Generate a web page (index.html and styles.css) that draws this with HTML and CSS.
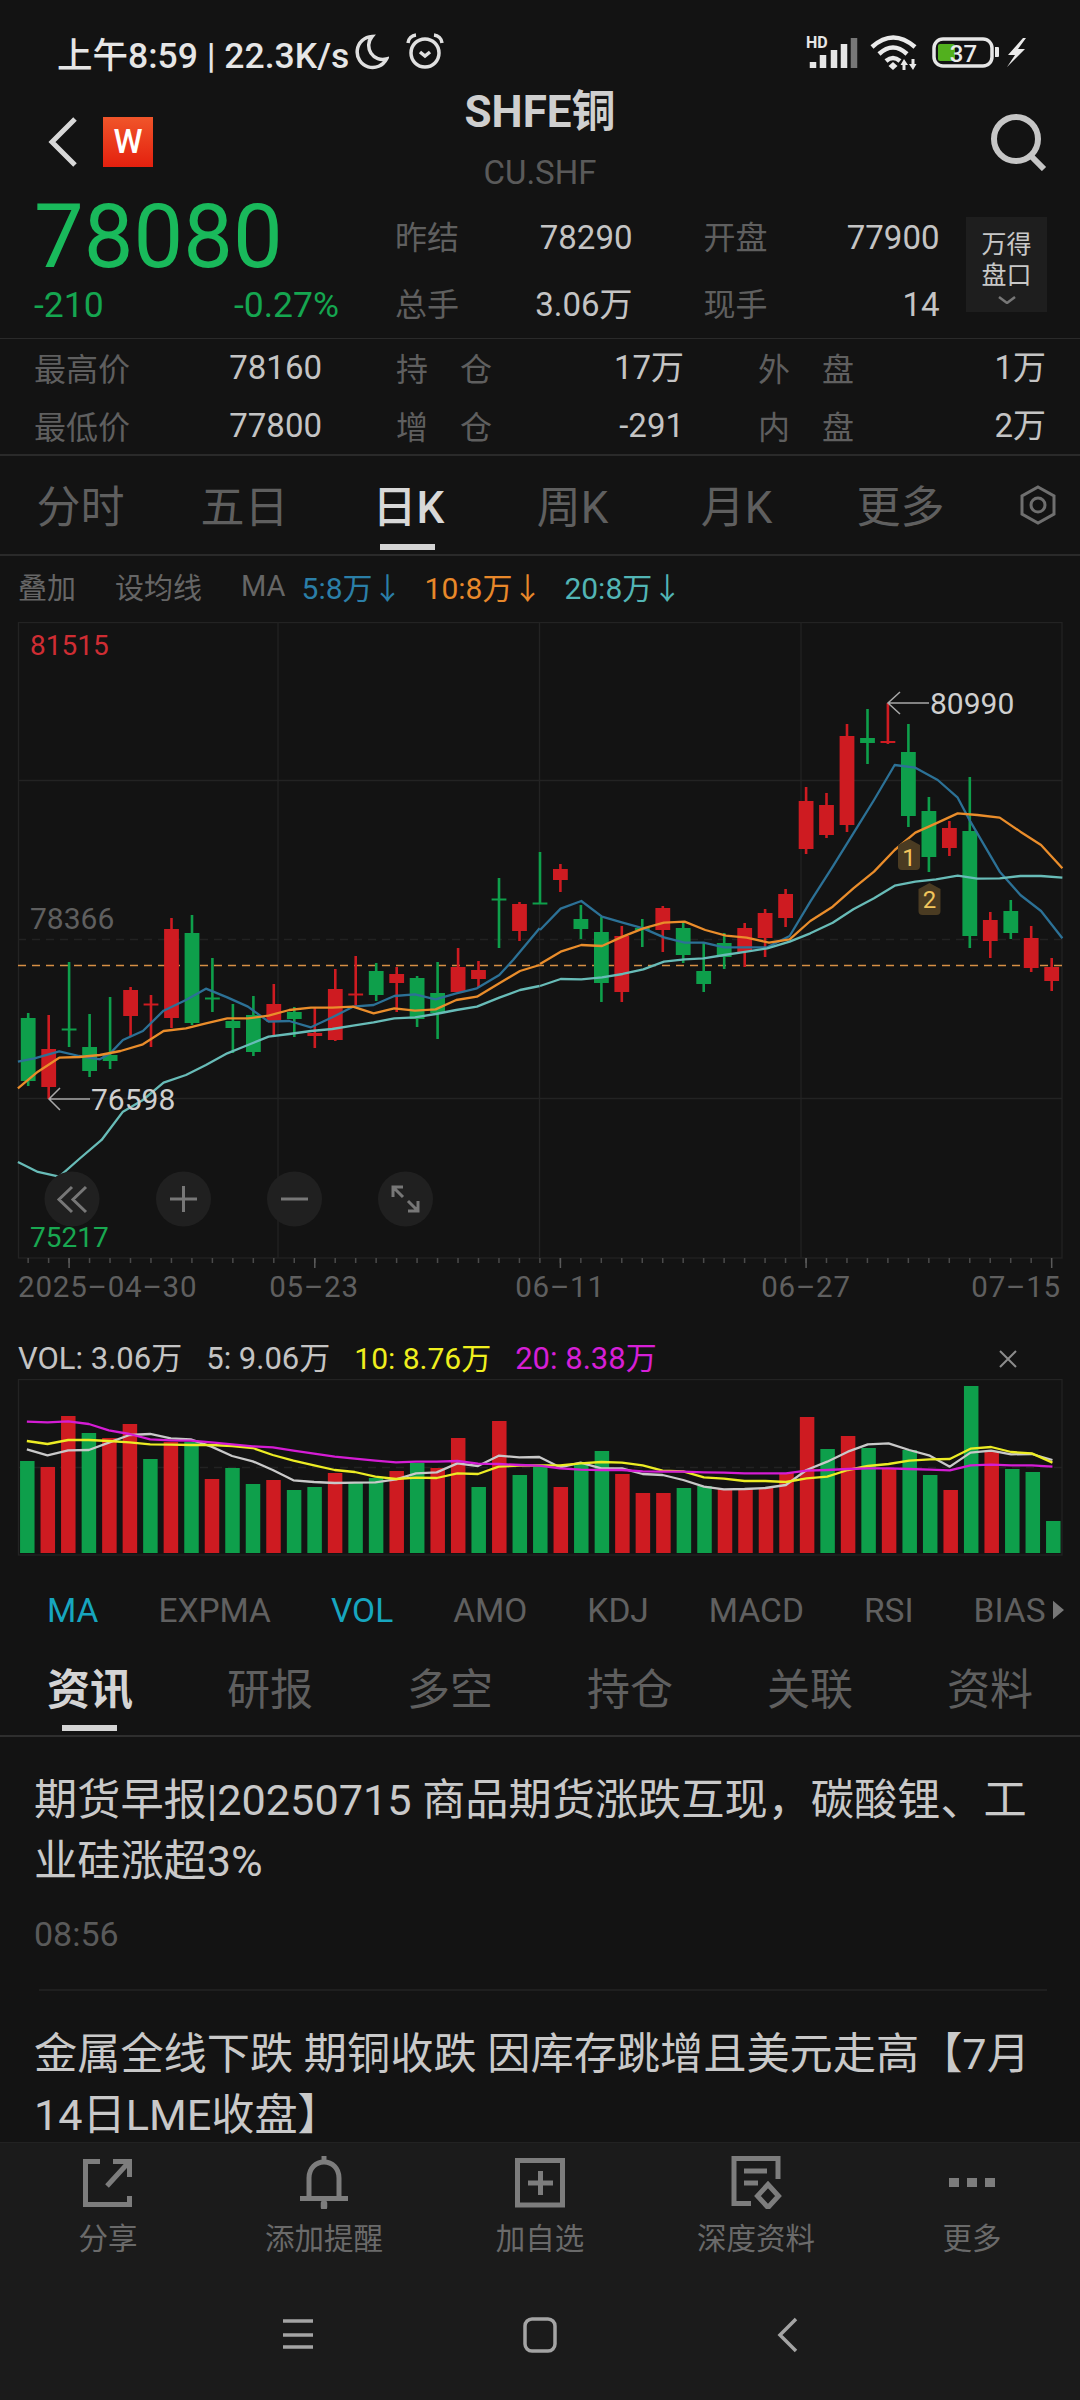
FILE: index.html
```html
<!DOCTYPE html>
<html lang="zh-CN">
<head>
<meta charset="utf-8">
<title>SHFE铜</title>
<link rel="stylesheet" href="styles.css">
</head>
<body>
<div class="app">
  <header class="status">
    <span class="status-text">上午8:59 | 22.3K/s</span>
    <svg class="moon" viewBox="0 0 36 36"><path class="st-line" d="M19 2.5A15.5 15.5 0 1 0 33.5 25 A14 14 0 0 1 19 2.5Z"/></svg>
    <svg class="alarm" viewBox="0 0 40 40"><circle class="st-line" cx="20" cy="21" r="14"/><path class="st-line" d="M3 11A9 9 0 0 1 11 3M37 11A9 9 0 0 0 29 3M15 20l5 4 5-4"/></svg>
    <svg class="status-right" viewBox="800 30 230 44">
      <text class="st-hd" x="806" y="48">HD</text>
      <path class="st-bar" d="M813 68V62M823 68V55M834 68V50M844 68V44"/>
      <path class="st-bar-off" d="M854 68V38"/>
      <path class="st-wifi" d="M872 47Q893 28 915 47M879 54Q893 41 907 54M886 61Q893 55 900 61"/>
      <path class="st-fill" d="M893 62l4.500 4-4.500 4-4.500-4zM904 59l4 6h-2.500v5h-3v-5h-2zM913 70l-4-6h2.500v-5h3v5h2z"/>
      <rect class="st-batt" x="934" y="39" width="58" height="27" rx="9"/>
      <rect class="st-level" x="938" y="44" width="17" height="17" rx="2"/>
      <text class="st-batt-num" x="963.500" y="61.500">37</text>
      <path class="st-fill" d="M995 47h3a1 1 0 0 1 1 1v8a1 1 0 0 1-1 1h-3zM1023 38l-15 17h7l-8 12 18-18h-7l8-11z"/>
    </svg>
  </header>

  <nav class="topbar">
    <div class="topbar-left">
      <svg class="back" viewBox="0 0 32 52"><path d="M28 3L5 26l23 23"/></svg>
      <span class="logo">W</span>
    </div>
    <div class="topbar-title">
      <div class="title">SHFE铜</div>
      <div class="subtitle">CU.SHF</div>
    </div>
    <svg class="search" viewBox="0 0 58 58"><circle cx="26" cy="26" r="22"/><path d="M41 43l13 13"/></svg>
  </nav>

  <section class="quote">
    <div class="price-block">
      <div class="price">78080</div>
      <div class="change"><span>-210</span><span>-0.27%</span></div>
    </div>
    <div class="stats">
      <div class="stat-row">
        <div class="stat"><span class="lab">昨结</span><span class="val">78290</span></div>
        <div class="stat"><span class="lab">开盘</span><span class="val">77900</span></div>
      </div>
      <div class="stat-row">
        <div class="stat"><span class="lab">总手</span><span class="val">3.06万</span></div>
        <div class="stat"><span class="lab">现手</span><span class="val">14</span></div>
      </div>
    </div>
    <div class="wind-btn">
      <span>万得</span><span>盘口</span>
      <svg class="wind-chev" viewBox="0 0 18 8"><path d="M1 1l8 6 8-6"/></svg>
    </div>
  </section>

  <section class="detail">
    <div class="detail-row">
      <div class="dcell"><span class="dlab">最高价</span><span class="val">78160</span></div>
      <div class="dcell"><span class="dlab">持　仓</span><span class="val">17万</span></div>
      <div class="dcell"><span class="dlab">外　盘</span><span class="val">1万</span></div>
    </div>
    <div class="detail-row">
      <div class="dcell"><span class="dlab">最低价</span><span class="val">77800</span></div>
      <div class="dcell"><span class="dlab">增　仓</span><span class="val">-291</span></div>
      <div class="dcell"><span class="dlab">内　盘</span><span class="val">2万</span></div>
    </div>
  </section>

  <div class="period-tabs">
    <span class="ptab">分时</span>
    <span class="ptab">五日</span>
    <span class="ptab active">日K</span>
    <span class="ptab">周K</span>
    <span class="ptab">月K</span>
    <span class="ptab">更多</span>
    <svg class="hex" viewBox="0 0 36 40"><path d="M18 2l16 9v18l-16 9-16-9V11z"/><circle cx="18" cy="20" r="7"/></svg>
  </div>

  <div class="ma-row">
    <span class="ma-tool">叠加</span>
    <span class="ma-tool">设均线</span>
    <span class="ma-tool ma-name">MA</span>
    <span class="ma-val c-blue">5:8万↓</span>
    <span class="ma-val c-orange">10:8万↓</span>
    <span class="ma-val c-teal">20:8万↓</span>
  </div>

  <svg class="kline" viewBox="0 622 1080 686">
    <rect class="grid" x="18.500" y="622.500" width="1043.500" height="635.500"/>
    <path class="grid" d="M278 622V1258M539.500 622V1258M801 622V1258M18 780.500H1062M18 1098.500H1062"/>
    <path class="grid-dash" d="M18 939.500H1062"/>
    <path class="last-dash" d="M18 965.500H1062"/>

    <path class="wick red" d="M48.700 1015V1099M130.600 987V1037M151 995V1047M171.500 918V1028M273.800 984V1036M314.800 1008V1048M335.300 969V1041M355.700 956V1008M396.700 967V1012M458.100 948V993M478.500 961V987M519.500 902V941M560.400 864V892M621.800 926V1002M662.800 906V952M744.700 923V967M765.100 909V957M785.600 889V927M806.100 787V854M826.500 793V838M847 724V832M887.900 703V744M949.400 821V856M990.300 912V958M1031.200 926V972M1051.700 958V991"/>
    <path class="body red" d="M48.700 1049V1087M130.600 990V1016M151 1003.500V1005.500M171.500 929V1018M273.800 1004V1022M314.800 1033V1036M335.300 989V1040M355.700 993.500V995.500M396.700 974V983M458.100 967V992M478.500 970V979M519.500 904V931M560.400 869V880M621.800 936V992M662.800 908V930M744.700 928V952M765.100 913V938M785.600 894V918M806.100 801V849M826.500 805V835M847 736V825M887.900 741V743M949.400 828V848M990.300 920V941M1031.200 938V968M1051.700 967V981"/>
    <path class="wick green" d="M28.200 1013V1086M69.100 962V1047M89.600 1014V1077M110.100 997V1069M192 915V1025M212.400 958V1012M232.900 1004V1053M253.400 996V1056M294.300 1007V1037M376.200 963V1001M417.100 976V1027M437.600 962V1039M499 878V948M540 852V904M580.900 905V939M601.400 917V1002M642.300 919V947M683.200 923V963M703.700 942V992M724.200 933V969M867.500 709V764M908.400 724V827M928.900 797V872M969.800 777V948M1010.800 900V939"/>
    <path class="body green" d="M28.200 1018V1081M69.100 1028.500V1030.500M89.600 1047V1071M110.100 1055V1061M192 933V1023M212.400 997.500V999.500M232.900 1021V1028M253.400 1015V1052M294.300 1012V1019M376.200 971V995M417.100 978V1019M437.600 993V1013M499 898.500V900.500M540 902.500V904.500M580.900 919V929M601.400 932V983M642.300 928V930M683.200 928V955M703.700 971V984M724.200 943V957M867.500 738V743M908.400 752V816M928.900 811V857M969.800 831V936M1010.800 911V933"/>

    <g class="seg-left">
      <polyline class="ma c-blue-s" points="52,305 100,295 172,274 230,288 290,298 320,280 357,240 415,213 475,152 540,120 598,86 660,112 720,140 780,185 840,183 903,202 965,172 1025,140 1085,135 1145,108 1205,103 1265,118 1325,100 1385,85 1450,45 1490,0 1567,-95"/>
      <polyline class="ma c-orange-s" points="52,385 110,335 172,293 230,291 290,285 350,273 415,253 475,213 540,205 598,190 660,175 720,175 780,167 840,150 903,143 965,143 1025,140 1085,160 1145,145 1205,152 1265,148 1325,120 1385,110 1450,70 1510,33 1567,15"/>
      <polyline class="ma c-teal-s" points="52,606 110,636 172,650 230,597 295,540 357,455 415,420 475,368 540,345 598,315 660,280 720,255 780,230 840,222 903,213 965,207 1025,197 1085,187 1145,175 1205,172 1265,162 1325,150 1385,140 1450,113 1510,90 1567,78"/>
    </g>
    <g class="seg-right">
      <polyline class="ma c-blue-s" points="0,930 60,866 120,843 180,890 240,908 300,925 360,952 420,968 475,968 535,982 600,982 660,982 725,948 785,845 850,740 910,640 970,540 1030,435 1090,443 1155,480 1213,533 1250,605 1335,755 1395,825 1455,873 1517,955"/>
      <polyline class="ma c-orange-s" points="0,1032 60,995 120,975 180,978 240,950 300,925 360,908 420,905 480,930 540,947 600,953 665,968 725,958 785,903 850,860 910,805 970,755 1030,690 1090,638 1150,610 1213,580 1270,585 1335,593 1395,635 1455,675 1517,745"/>
      <polyline class="ma c-teal-s" points="0,1098 60,1077 120,1078 180,1072 240,1062 300,1048 360,1025 420,1018 475,1015 535,1005 600,995 660,985 725,965 785,940 850,908 910,868 970,835 1030,797 1090,785 1150,778 1213,767 1270,776 1335,775 1395,768 1455,768 1517,773"/>
    </g>

    <path class="badge" d="M898 845L909 839L920 845V866Q920 870 916 870H902Q898 870 898 866Z"/>
    <text class="badge-num" x="909" y="866">1</text>
    <path class="badge" d="M918.500 889L929.500 883L940.500 889V911Q940.500 915 936.500 915H922.500Q918.500 915 918.500 911Z"/>
    <text class="badge-num" x="929.500" y="908">2</text>

    <text class="lv red-t" x="30" y="655">81515</text>
    <text class="lv mid-t" x="30" y="929">78366</text>
    <text class="lv green-t" x="30" y="1247">75217</text>
    <path class="pin" d="M929 703H889M900 692L888 703L900 714M90 1099H49M60 1088L49 1099L60 1110"/>
    <text class="lv pin-t" x="930" y="714">80990</text>
    <text class="lv pin-t" x="91" y="1110">76598</text>

    <circle class="zoom-bg" cx="72" cy="1199" r="27.500"/>
    <circle class="zoom-bg" cx="183.500" cy="1199" r="27.500"/>
    <circle class="zoom-bg" cx="294.500" cy="1199" r="27.500"/>
    <circle class="zoom-bg" cx="405.500" cy="1199" r="27.500"/>
    <path class="zoom-ic" d="M72 1187L59 1199.500L72 1212M86 1187L73 1199.500L86 1212M170 1199H197M183.500 1186V1212M281 1199H308M393 1197V1187H403M393 1187L403 1197M418 1201V1211H408M418 1211L408 1201"/>

    <line class="ticks" x1="27.400" x2="1052" y1="1260.500" y2="1260.500"/>
    <path class="tick-long" d="M69.100 1258V1268M314.800 1258V1268M560.400 1258V1268M806.100 1258V1268M1051.700 1258V1268"/>
    <text class="date" x="18" y="1297">2025–04–30</text>
    <text class="date mid" x="314" y="1297">05–23</text>
    <text class="date mid" x="560" y="1297">06–11</text>
    <text class="date mid" x="806" y="1297">06–27</text>
    <text class="date end" x="1061" y="1297">07–15</text>
  </svg>

  <div class="vol-legend">
    <span class="vl-white">VOL: 3.06万</span>
    <span class="vl-white">5: 9.06万</span>
    <span class="vl-yellow">10: 8.76万</span>
    <span class="vl-magenta">20: 8.38万</span>
    <svg class="vol-close" viewBox="0 0 18 18"><path d="M1 1l16 16M17 1L1 17"/></svg>
  </div>

  <svg class="vol" viewBox="0 1379 1080 178">
    <rect class="grid" x="18.500" y="1379.500" width="1043.500" height="175.500"/>
    <path class="grid-dash" d="M18 1467.500H1062"/>
    <path class="vbar red" d="M47.800 1553V1467M68.300 1553V1416M109.400 1553V1438M129.900 1553V1424M170.900 1553V1442M212 1553V1479M273.500 1553V1480M335.100 1553V1473M396.700 1553V1471M437.700 1553V1468M458.200 1553V1438M499.300 1553V1421M560.800 1553V1487M622.400 1553V1474M642.900 1553V1493M663.400 1553V1493M725 1553V1489M745.500 1553V1489M766 1553V1488M786.500 1553V1473M807.100 1553V1417M848.100 1553V1436M889.100 1553V1468M950.700 1553V1490M991.700 1553V1452"/>
    <path class="vbar green" d="M27.300 1553V1461M88.900 1553V1433M150.400 1553V1459M191.500 1553V1442M232.500 1553V1468M253 1553V1484M294.100 1553V1490M314.600 1553V1487M355.600 1553V1482M376.100 1553V1478M417.200 1553V1463M478.700 1553V1487M519.800 1553V1475M540.300 1553V1467M581.300 1553V1463M601.900 1553V1451M683.900 1553V1488M704.500 1553V1486M827.600 1553V1449M868.600 1553V1448M909.700 1553V1450M930.200 1553V1475M971.200 1553V1386M1012.300 1553V1469M1032.800 1553V1472M1053.300 1553V1521"/>
    <g class="seg-vol">
      <polyline class="ma vm-white" points="39,388 69,406 99,391 129,390 158,368 188,345 218,342 248,355 277,358 307,380 337,408 367,424 396,450 426,481 456,486 486,489 515,488 545,487 575,478 604,460 634,457 664,430 694,438 724,407 754,412 783,411 813,442 843,428 873,445 903,445 933,462 962,465 992,480 1022,500 1051,508 1081,507 1111,504 1141,495 1171,450 1201,425 1231,395 1260,373 1290,370 1320,390 1350,407 1379,440 1409,398 1439,392 1468,403 1498,402 1528,420"/>
      <polyline class="ma vm-yellow" points="39,363 69,372 99,360 129,360 158,363 188,367 218,373 248,374 277,375 307,375 337,378 367,384 396,405 426,422 456,436 486,450 515,456 545,470 575,477 604,473 634,474 664,460 694,462 724,440 754,437 783,436 813,436 843,430 873,426 903,428 933,436 962,452 992,454 1022,472 1051,476 1081,483 1111,483 1141,486 1171,475 1201,470 1231,450 1260,438 1290,432 1320,422 1350,418 1379,417 1409,386 1439,381 1468,396 1498,400 1528,428"/>
      <polyline class="ma vm-magenta" points="39,305 69,307 99,304 129,312 158,331 188,342 218,358 248,361 277,362 307,367 337,373 367,379 396,382 426,392 456,401 486,410 515,416 545,422 575,427 604,425 634,425 664,423 694,431 724,432 754,435 783,437 813,445 843,449 873,450 903,450 933,454 962,455 992,455 1022,457 1051,458 1081,460 1111,460 1141,460 1171,452 1201,450 1231,447 1260,445 1290,445 1320,447 1350,449 1379,451 1409,436 1439,434 1468,436 1498,436 1528,440"/>
    </g>
  </svg>

  <div class="ind-tabs">
    <span class="on">MA</span>
    <span>EXPMA</span>
    <span class="on">VOL</span>
    <span>AMO</span>
    <span>KDJ</span>
    <span>MACD</span>
    <span>RSI</span>
    <span>BIAS</span>
    <svg class="ind-more" viewBox="0 0 12 20"><path d="M0 0l12 10L0 20z"/></svg>
  </div>

  <div class="news-tabs">
    <span class="ntab active">资讯</span>
    <span class="ntab">研报</span>
    <span class="ntab">多空</span>
    <span class="ntab">持仓</span>
    <span class="ntab">关联</span>
    <span class="ntab">资料</span>
  </div>

  <main class="news">
    <article class="news-item">
      <h2 class="headline">期货早报|20250715 商品期货涨跌互现，碳酸锂、工业硅涨超3%</h2>
      <time class="news-time">08:56</time>
    </article>
    <div class="news-sep"></div>
    <article class="news-item">
      <h2 class="headline">金属全线下跌 期铜收跌 因库存跳增且美元走高【7月14日LME收盘】</h2>
    </article>
  </main>

  <footer class="bottom">
    <div class="actions">
      <div class="action">
        <svg class="act-ic" viewBox="0 0 56 56"><path d="M20 8.500H5.500V51.500H49.500V43M27 33L49 9M33 8.500H49.500V24"/></svg>
        <span>分享</span>
      </div>
      <div class="action">
        <svg class="act-ic" viewBox="0 0 56 56"><path d="M13 44V25C13 15 20 9 28 9S43 15 43 25V44M4 45.500H52M28 3V9"/><path class="thick" d="M28 50.500V54"/></svg>
        <span>添加提醒</span>
      </div>
      <div class="action">
        <svg class="act-ic" viewBox="0 0 56 56"><path d="M5.500 7.500H50.500V52H5.500ZM16 30H41M28.500 18V42"/></svg>
        <span>加自选</span>
      </div>
      <div class="action">
        <svg class="act-ic" viewBox="0 0 56 56"><path d="M23 50.500H6V5.500H50V26M16 18H39M16 30H30M40 31.500L50.500 43L40 54.500L29.500 43Z"/></svg>
        <span>深度资料</span>
      </div>
      <div class="action">
        <svg class="act-ic" viewBox="0 0 56 56"><path class="dots" d="M5 25h10v9H5zM23 25h10v9H23zM41 25h10v9H41z"/></svg>
        <span>更多</span>
      </div>
    </div>
    <div class="sysnav">
      <svg class="sys-ic" viewBox="0 0 40 40"><path d="M5 6H35M5 20H35M5 32H35"/></svg>
      <svg class="sys-ic" viewBox="0 0 40 40"><rect x="5" y="4" width="30" height="32" rx="7"/></svg>
      <svg class="sys-ic" viewBox="0 0 40 40"><path d="M28 4L12 20L28 36"/></svg>
    </div>
  </footer>
</div>
</body>
</html>
```

FILE: styles.css
```css
* { box-sizing: border-box; }
html, body { margin: 0; padding: 0; background: #131313; }
body { font-family: Roboto, "Noto Sans CJK SC", sans-serif; color: #c8c8c8; }
svg { display: block; flex: none; }
.app { width: 1080px; height: 2400px; display: flex; flex-direction: column; overflow: hidden; background: #131313; }

/* status bar */
.status { height: 80px; padding: 24px 50px 0 57px; display: flex; align-items: center; flex: none; }
.status-text { font-size: 35.500px; font-weight: 500; color: #e6e6e6; white-space: nowrap; }
.moon { width: 36px; height: 36px; margin-left: 4px; }
.alarm { width: 40px; height: 40px; margin-left: 16px; }
.status-right { width: 230px; height: 44px; margin-left: auto; }
.st-line { fill: none; stroke: #e0e0e0; stroke-width: 3.5; }
.st-hd { font-size: 16px; font-weight: 700; fill: #e6e6e6; }
.st-bar { stroke: #e6e6e6; stroke-width: 6.500; fill: none; }
.st-bar-off { stroke: #777; stroke-width: 6.500; fill: none; }
.st-wifi { fill: none; stroke: #eaeaea; stroke-width: 4.500; }
.st-fill { fill: #eaeaea; }
.st-batt { fill: none; stroke: #e6e6e6; stroke-width: 3.500; }
.st-level { fill: #52b01e; }
.st-batt-num { font-size: 24px; font-weight: 500; fill: #eaeaea; text-anchor: middle; }

/* top bar */
.topbar { height: 124px; flex: none; display: grid; grid-template-columns: 300px 480px 300px; align-items: center; }
.topbar-left { display: flex; align-items: center; padding-left: 47px; }
.back { width: 32px; height: 52px; }
.back path { fill: none; stroke: #d8d8d8; stroke-width: 5; }
.logo { width: 50px; height: 50px; margin-left: 24px; background: linear-gradient(180deg, #f0552a, #e4200e); color: #fff; font-size: 33px; font-weight: 500; text-align: center; line-height: 50px; }
.topbar-title { text-align: center; }
.title { height: 62px; line-height: 64px; font-size: 44px; font-weight: 700; color: #cfcfcf; }
.subtitle { height: 62px; line-height: 62px; font-size: 33px; color: #5a5a5a; }
.search { width: 58px; height: 58px; justify-self: end; margin-right: 32px; }
.search circle, .search path { fill: none; stroke: #c6c6c6; stroke-width: 6; }

/* quote */
.quote { height: 135px; flex: none; display: flex; align-items: flex-start; padding-left: 34px; border-bottom: 1px solid #2a2a2a; }
.price-block { width: 361px; flex: none; }
.price { font-size: 88.500px; line-height: 67px; height: 67px; color: #19b95b; }
.change { width: 305px; height: 68px; display: flex; justify-content: space-between; align-items: center; font-size: 35.500px; color: #15a650; }
.stats { width: 546px; flex: none; }
.stat-row { height: 67px; display: flex; gap: 71px; align-items: center; }
.stat-row + .stat-row { height: 68px; }
.stat { width: 237.500px; display: flex; justify-content: space-between; align-items: center; }
.stat + .stat { width: 236px; }
.lab { font-size: 32px; color: #5f5f5f; margin-bottom: 6px; }
.val { font-size: 33px; line-height: 40px; height: 40px; color: #c4c4c4; }
.wind-btn { width: 81px; height: 95px; margin: 13px 0 0 25px; background: #1e1e1e; display: flex; flex-direction: column; align-items: center; padding-top: 12px; font-size: 25px; line-height: 31px; color: #c8c8c8; }
.wind-chev { width: 18px; height: 8px; margin-top: 5px; }
.wind-chev path { fill: none; stroke: #777; stroke-width: 2.500; }

/* day detail */
.detail { height: 117px; flex: none; padding: 0 34px; border-bottom: 2px solid #2a2a2a; }
.detail-row { height: 58px; display: flex; align-items: center; gap: 74px; }
.dcell { width: 288px; display: flex; justify-content: space-between; align-items: center; }
.dlab { font-size: 32px; color: #5f5f5f; margin-bottom: 3px; }

/* period tabs */
.period-tabs { height: 100px; flex: none; display: grid; grid-template-columns: repeat(6, 164px) 54px; align-items: center; border-bottom: 2px solid #2a2a2a; }
.ptab { position: relative; height: 98px; line-height: 104px; padding-right: 3px; text-align: center; font-size: 44px; color: #5f5f5f; }
.ptab.active { color: #d8d8d8; font-weight: 500; }
.ptab.active::after { content: ""; position: absolute; left: 52px; width: 55px; bottom: 4px; height: 6px; background: #d4d4d4; }
.hex { width: 36px; height: 40px; margin-left: 36px; }
.hex path, .hex circle { fill: none; stroke: #6f6f6f; stroke-width: 3; }

/* MA legend */
.ma-row { height: 66px; flex: none; padding: 0 0 6px 18px; display: flex; align-items: center; font-size: 30px; }
.ma-tool { color: #666; margin-right: 39px; font-size: 29px; }
.ma-name { margin-right: 16px; }
.ma-val { margin-right: 22px; }
.c-blue { color: #2b7fa8; }
.c-orange { color: #e8882a; }
.c-teal { color: #52b5b5; }

/* candlestick chart */
.kline { width: 1080px; height: 686px; }
.grid { fill: none; stroke: #232323; stroke-width: 1.300; }
.grid-dash { fill: none; stroke: #222; stroke-width: 1.300; stroke-dasharray: 8 6; }
.last-dash { fill: none; stroke: #d68f45; stroke-width: 1.300; stroke-dasharray: 8 6; }
.wick { fill: none; stroke-width: 2.600; }
.body { fill: none; stroke-width: 14.800; }
.vbar { fill: none; stroke-width: 14.500; }
.red { stroke: #ce1b21; }
.green { stroke: #0e9f4b; }
.ma { fill: none; stroke-width: 2.300; vector-effect: non-scaling-stroke; stroke-linejoin: round; }
.seg-left { transform: translate(0, 960px) scale(.34435, .33333); }
.seg-right { transform: translate(540px, 620px) scale(.34435, .33333); }
.seg-vol { transform: translate(0, 1320px) scale(.68878, .33333); }
.c-blue-s { stroke: #2c7196; }
.c-orange-s { stroke: #ea8d2b; }
.c-teal-s { stroke: #68bcb8; }
.badge { fill: #4a3b22; }
.badge-num { font-size: 24px; fill: #f2c55c; text-anchor: middle; }
.lv { font-size: 29px; }
.red-t { fill: #cf2d33; font-size: 28px; }
.mid-t { fill: #5f5f5f; font-size: 30px; }
.green-t { fill: #19a851; font-size: 28px; }
.pin-t { fill: #cfcfcf; font-size: 30px; }
.pin { fill: none; stroke: #a8a8a8; stroke-width: 1.500; }
.zoom-bg { fill: #202020; }
.zoom-ic { fill: none; stroke: #777; stroke-width: 3; }
.ticks { stroke: #4a4a4a; stroke-width: 5; stroke-dasharray: 1.500 18.970; }
.tick-long { fill: none; stroke: #5a5a5a; stroke-width: 1.500; }
.date { font-size: 29.500px; letter-spacing: .8px; fill: #5f5f5f; }
.date.mid { text-anchor: middle; }
.date.end { text-anchor: end; }

/* volume */
.vol-legend { height: 71px; flex: none; padding: 31px 63px 0 18px; display: flex; align-items: center; gap: 24px; font-size: 31px; line-height: 40px; white-space: nowrap; }
.vl-white { color: #c4c4c4; }
.vl-yellow { color: #efef1e; font-size: 30px; }
.vl-magenta { color: #d61fd6; }
.vol-close { width: 18px; height: 18px; margin-left: auto; }
.vol-close path { fill: none; stroke: #8c8c8c; stroke-width: 2; }
.vol { width: 1080px; height: 178px; }
.vm-white { stroke: #c9c9c9; }
.vm-yellow { stroke: #ecec24; }
.vm-magenta { stroke: #d41cd4; }

/* indicator tabs */
.ind-tabs { height: 88px; flex: none; padding: 18px 0 0 47px; display: flex; align-items: center; gap: 60px; font-size: 33.500px; color: #606060; white-space: nowrap; }
.ind-tabs .on { color: #17a6bf; }
.ind-more { width: 11px; height: 20px; margin-left: -53px; }
.ind-more path { fill: #777; }

/* news tabs */
.news-tabs { height: 92px; flex: none; display: grid; grid-template-columns: repeat(6, 180px); border-bottom: 2px solid #2e2e2e; }
.ntab { position: relative; height: 90px; line-height: 90px; text-align: center; font-size: 43px; color: #5f5f5f; }
.ntab.active { color: #d4d4d4; font-weight: 700; }
.ntab.active::after { content: ""; position: absolute; left: 62px; width: 55px; bottom: 4px; height: 6px; background: #d4d4d4; }

/* news */
.news { flex: 1; min-height: 0; overflow: hidden; }
.news-item { padding: 33px 34px 0 34px; }
.headline { margin: 0; font-size: 43.200px; font-weight: 400; line-height: 61px; color: #c9c9c9; }
.news-time { display: block; margin-top: 22px; font-size: 34px; line-height: 40px; color: #5a5a5a; }
.news-sep { height: 2px; margin: 35px 33px 0 39px; background: #1f1f1f; }

/* bottom */
.bottom { height: 258px; flex: none; background: #1b1b1b; border-top: 1px solid #222; display: flex; flex-direction: column; }
.actions { display: grid; grid-template-columns: repeat(5, 216px); padding-top: 10px; }
.action { display: flex; flex-direction: column; align-items: center; font-size: 29.500px; line-height: 40px; color: #6a6a6a; }
.act-ic { width: 56px; height: 56px; margin-bottom: 10px; }
.act-ic path { fill: none; stroke: #7d7d7d; stroke-width: 5; }
.act-ic path.thick { stroke-width: 6.500; stroke-linecap: round; }
.act-ic path.dots { fill: #7d7d7d; stroke: none; }
.sysnav { flex: 1; padding: 11px 0 0 6px; display: flex; justify-content: center; align-items: center; }
.sys-ic { width: 40px; height: 40px; }
.sys-ic:nth-child(1) { margin-right: 202px; }
.sys-ic:nth-child(2) { margin-right: 208px; }
.sys-ic path, .sys-ic rect { fill: none; stroke: #a4a4a4; stroke-width: 3.500; }
```
